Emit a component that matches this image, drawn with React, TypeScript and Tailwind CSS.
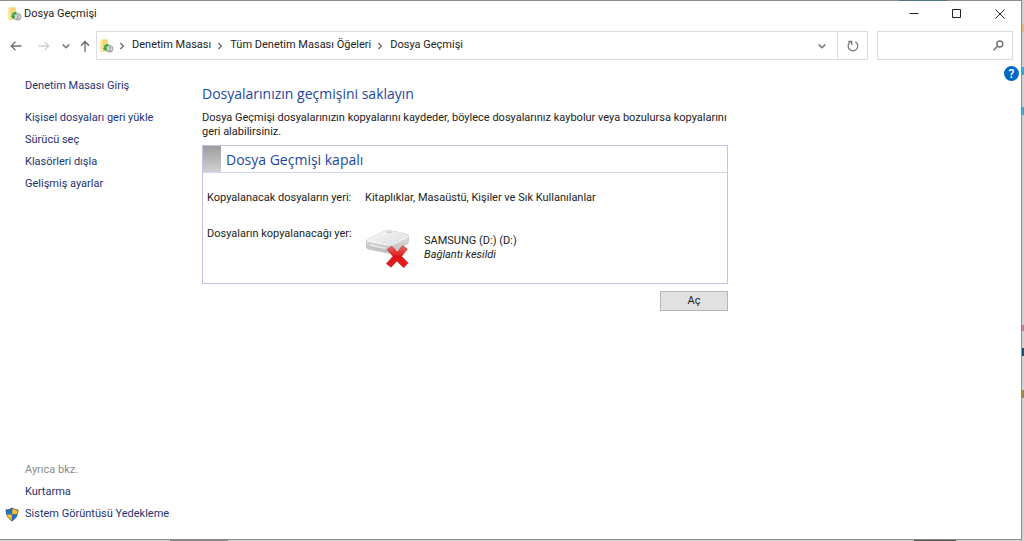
import type { ReactNode } from 'react'

const taskLinks = [
  'Kişisel dosyaları geri yükle',
  'Sürücü seç',
  'Klasörleri dışla',
  'Gelişmiş ayarlar',
]

const crumbs = ['Denetim Masası', 'Tüm Denetim Masası Öğeleri', 'Dosya Geçmişi']

function HistoryIcon() {
  return (
    <svg width="14" height="14" viewBox="0 0 14 14" aria-hidden="true">
      <path d="M.5 1 3 .2 8 .5v10.500L3 13 .5 12Z" fill="#f7d673" />
      <path d="M.5 1 2.500.4v12L.5 12Z" fill="#fbe6a2" />
      <circle cx="9.500" cy="9.800" r="3.400" fill="#d4d9d7" stroke="#8d9593" strokeWidth=".9" />
      <path d="M9.500 7.800v2L11 8.500M8 11.500h3" stroke="#7d8684" strokeWidth=".7" fill="none" />
      <path d="M8.500 6C5.500 5.800 4.200 7.500 4.700 9.700" stroke="#27ad43" strokeWidth="1.800" fill="none" />
      <path d="m2.800 9.300 4.300-.6L5.600 12.300Z" fill="#27ad43" />
    </svg>
  )
}

function Chevron({ down = false }: { down?: boolean }) {
  return (
    <svg
      width="8"
      height="8"
      viewBox="0 0 8 8"
      fill="none"
      stroke="#707070"
      strokeWidth="1.4"
      aria-hidden="true"
    >
      <path d={down ? 'm.7 2.4 3.3 3.3 3.3-3.3' : 'm2.4 1 3 3-3 3'} />
    </svg>
  )
}

function Arrow({ d, color }: { d: string; color: string }) {
  return (
    <svg
      width="12"
      height="12"
      viewBox="0 0 12 12"
      fill="none"
      stroke={color}
      strokeWidth="1.3"
      aria-hidden="true"
    >
      <path d={d} />
    </svg>
  )
}

function DriveIcon() {
  return (
    <svg width="46" height="42" viewBox="0 0 46 42" aria-hidden="true">
      <defs>
        <linearGradient id="driveTop" x1="0" y1="0" x2="1" y2="1">
          <stop offset="0" stopColor="#f8f8f8" />
          <stop offset="1" stopColor="#dedede" />
        </linearGradient>
        <linearGradient id="driveFront" x1="0" y1="0" x2="0" y2="1">
          <stop offset="0" stopColor="#f1f1f1" />
          <stop offset="1" stopColor="#b9b9b9" />
        </linearGradient>
        <linearGradient id="cross" x1="0" y1="0" x2="0" y2="1">
          <stop offset="0" stopColor="#ee6a6a" />
          <stop offset=".5" stopColor="#dc1414" />
          <stop offset="1" stopColor="#ef1c1c" />
        </linearGradient>
      </defs>
      <path
        d="M1.500 13 20 4q2-1 4-.6L41.500 7q1.800.4 1.800 2v7L27 25.500q-2 1-4 .5L3.500 22q-2-.5-2-2Z"
        fill="url(#driveFront)"
        stroke="#c2c2c2"
        strokeWidth=".8"
      />
      <path
        d="M1.800 12.500 20 4q2-1 4-.6L41.500 7q2 .5.5 1.500L27.500 17q-2 1-4 .5L2.500 13.700Z"
        fill="url(#driveTop)"
      />
      <path d="m2 14 21.500 4.200q2 .4 4-.6L43 9.300" fill="none" stroke="#fff" />
      <path d="m4 16 17.500 3.800v3L4 19.500Z" fill="#e2e2e2" stroke="#b5b5b5" strokeWidth=".6" />
      <ellipse cx="24.500" cy="5.300" rx="3" ry="1" fill="#d2d2d2" />
      <path
        d="m22.500 22.500 4-3.300 5.700 5.500 5.500-6 4.600 3.300-5.700 7.300 6.500 6.700-4.300 4.700-7.100-6.700-5.500 6.200-4.800-3.500 6.500-7.300Z"
        fill="url(#cross)"
        stroke="#b52b2b"
        strokeWidth=".7"
        strokeLinejoin="round"
      />
    </svg>
  )
}

function ShieldIcon() {
  return (
    <svg width="14" height="15" viewBox="0 0 14 15" aria-hidden="true">
      <path d="M7 .5Q9.500 2.500 13.300 2.500 14 10 7 14.500 0 10 .7 2.500 4.500 2.500 7 .5Z" fill="#4c5760" />
      <path d="M6.800 1.800v5.500H1.500Q1.300 5.300 1.600 3.400 4.500 3.200 6.800 1.800Z" fill="#1876d1" />
      <path d="M7.200 1.800v5.500h5.300q.2-2-.1-3.900Q9.500 3.200 7.200 1.800Z" fill="#fcc02d" />
      <path d="M6.800 7.500v5.800Q2.500 10.700 1.600 7.500Z" fill="#fcc02d" />
      <path d="M7.200 7.500v5.800q4.300-2.600 5.200-5.800Z" fill="#1876d1" />
    </svg>
  )
}

function SideLink({ children }: { children: ReactNode }) {
  return (
    <a href="#" className="block leading-[22px] text-[#1e3272] hover:underline">
      {children}
    </a>
  )
}

function TitleBar() {
  return (
    <header className="flex h-[26px] items-center pl-2">
      <HistoryIcon />
      <h1 className="ml-0.5 flex-1 text-[#222]">Dosya Geçmişi</h1>
      <div className="flex">
        <button type="button" aria-label="Simge durumuna küçült" className="flex w-[43px] justify-center">
          <svg width="10" height="10" viewBox="0 0 10 10" stroke="#222" aria-hidden="true">
            <path d="M.5 4.500h9" />
          </svg>
        </button>
        <button type="button" aria-label="Ekranı kapla" className="flex w-[43px] justify-center">
          <svg width="10" height="10" viewBox="0 0 10 10" fill="none" stroke="#222" aria-hidden="true">
            <path d="M.5.5h8v8h-8Z" />
          </svg>
        </button>
        <button type="button" aria-label="Kapat" className="flex w-[43px] justify-center">
          <svg width="10" height="10" viewBox="0 0 10 10" fill="none" stroke="#222" aria-hidden="true">
            <path d="m.5.5 9 9m0-9-9 9" />
          </svg>
        </button>
      </div>
    </header>
  )
}

function NavBar() {
  return (
    <nav className="mt-1 flex h-[29px] items-center pr-2 pl-[10px]">
      <button type="button" aria-label="Geri">
        <Arrow d="M11.500 6H1m4.500-4.200L1.200 6l4.300 4.200" color="#707070" />
      </button>
      <button type="button" aria-label="İleri" disabled className="ml-4">
        <Arrow d="M.5 6H11M6.500 1.800 10.800 6l-4.300 4.200" color="#cfcfcf" />
      </button>
      <button type="button" aria-label="Son konumlar" className="ml-3">
        <Chevron down />
      </button>
      <button type="button" aria-label="Yukarı" className="ml-[9px]">
        <Arrow d="M6 12V1.500M2 5.700l4-4.200 4 4.200" color="#666" />
      </button>
      <div className="ml-[5px] flex h-full flex-1 border border-[#dcdcdc]">
        <div className="flex flex-1 items-center pl-[3px]">
          <HistoryIcon />
          {crumbs.map((crumb) => (
            <div key={crumb} className="flex items-center">
              <span className="mr-1.5 ml-1">
                <Chevron />
              </span>
              <a href="#" className="mr-px text-[#222]">
                {crumb}
              </a>
            </div>
          ))}
        </div>
        <button type="button" aria-label="Önceki konumlar" className="flex w-[30px] items-center justify-center">
          <Chevron down />
        </button>
        <button
          type="button"
          aria-label="Yenile"
          className="flex w-[30px] items-center justify-center border-l border-[#dcdcdc]"
        >
          <svg width="12" height="12" viewBox="0 0 12 12" fill="none" stroke="#777" strokeWidth="1.300" aria-hidden="true">
            <path d="M8.300 1.800A4.800 4.800 0 1 1 3.300 2M1.300 1.500h3.400v3.400" />
          </svg>
        </button>
      </div>
      <label className="ml-[9px] flex h-full w-[136px] items-center border border-[#dcdcdc] pr-2">
        <input type="search" aria-label="Ara" className="min-w-0 flex-1 px-1 outline-none" />
        <svg width="11" height="11" viewBox="0 0 11 11" fill="none" stroke="#707070" strokeWidth="1.400" aria-hidden="true">
          <circle cx="6.800" cy="4" r="3" />
          <path d="M4.600 6.200.5 10.300" />
        </svg>
      </label>
    </nav>
  )
}

function Sidebar() {
  return (
    <aside className="flex w-[202px] shrink-0 flex-col pt-[15px] pb-[14px] pl-[25px]">
      <SideLink>Denetim Masası Giriş</SideLink>
      <ul className="mt-[10px]">
        {taskLinks.map((link) => (
          <li key={link}>
            <SideLink>{link}</SideLink>
          </li>
        ))}
      </ul>
      <div className="mt-auto">
        <h2 className="leading-[22px] text-[#8b8b8b]">Ayrıca bkz.</h2>
        <SideLink>Kurtarma</SideLink>
        <div className="-ml-5 flex items-center gap-1.5">
          <ShieldIcon />
          <SideLink>Sistem Görüntüsü Yedekleme</SideLink>
        </div>
      </div>
    </aside>
  )
}

function StatusPanel() {
  return (
    <section className="mt-1.5 border border-[#c3c3e6]">
      <div className="flex h-[27px] items-center border-b border-[#d0d3f0]">
        <div className="h-full w-[18px] bg-linear-to-b from-[#9c9c9c] to-[#d2d2d2]" />
        <h3 className="ml-[5px] pt-0.5 font-['Open_Sans',sans-serif] text-sm text-[#1c47a0]">
          Dosya Geçmişi kapalı
        </h3>
      </div>
      <dl className="grid grid-cols-[158px_1fr] pt-[18px] pb-[14px] pl-1 leading-[14px]">
        <dt>Kopyalanacak dosyaların yeri:</dt>
        <dd>Kitaplıklar, Masaüstü, Kişiler ve Sık Kullanılanlar</dd>
        <dt className="mt-[22px]">Dosyaların kopyalanacağı yer:</dt>
        <dd className="mt-[22px] flex gap-[13px]">
          <DriveIcon />
          <div className="mt-[7px]">
            <p>SAMSUNG (D:) (D:)</p>
            <p className="italic">Bağlantı kesildi</p>
          </div>
        </dd>
      </dl>
    </section>
  )
}

// Slivers of the page that stay visible past the window's right and bottom edges
function Backdrop() {
  return (
    <div aria-hidden="true" className="absolute inset-0 overflow-hidden bg-[#d2d2d2]">
      <div className="absolute top-6 right-0 h-2 w-0.5 bg-[#dfb986]" />
      <div className="absolute top-[67px] right-0 h-2 w-0.5 bg-[#39a9d4]" />
      <div className="absolute top-[107px] right-0 h-2 w-0.5 bg-[#39a9d4]" />
      <div className="absolute top-[325px] right-0 h-1.5 w-0.5 bg-[#bd8390]" />
      <div className="absolute top-[348px] right-0 h-2 w-0.5 bg-[#244d77]" />
      <div className="absolute top-[390px] right-0 h-2 w-0.5 bg-[#a8834f]" />
      <div className="absolute bottom-0 left-[170px] h-px w-[58px] bg-[#8b8585]" />
      <div className="absolute bottom-0 left-[914px] h-px w-[42px] bg-[#55524c]" />
    </div>
  )
}

export default function App() {
  return (
    <div className="relative h-screen pr-0.5 pb-px font-['Roboto','Noto_Sans',sans-serif] text-[11px] text-[#222]">
      <Backdrop />
      <div className="relative flex h-full flex-col border-t border-r border-b border-[#8c8c8c] bg-white">
        <div className="absolute -top-px right-[74px] h-px w-12 bg-[#4d7586]" />
        <TitleBar />
        <NavBar />
        <div className="flex min-h-0 flex-1">
          <Sidebar />
          <main className="min-w-0 flex-1 pt-6">
            <div className="max-w-[526px]">
              <h2 className="font-['Open_Sans',sans-serif] text-sm leading-5 text-[#1c47a0]">
                Dosyalarınızın geçmişini saklayın
              </h2>
              <p className="mt-[7px] leading-[14px]">
                Dosya Geçmişi dosyalarınızın kopyalarını kaydeder, böylece dosyalarınız kaybolur veya bozulursa
                kopyalarını geri alabilirsiniz.
              </p>
              <StatusPanel />
              <div className="mt-[7px] flex justify-end">
                <button
                  type="button"
                  className="h-5 w-[68px] border border-[#b5b5b5] bg-[#e1e1e1] text-[#222] hover:bg-[#e5f1fb]"
                >
                  Aç
                </button>
              </div>
            </div>
          </main>
          <button
            type="button"
            aria-label="Yardım"
            className="mt-[6px] mr-0.5 flex size-[15px] items-center justify-center rounded-full bg-[#0067c5] text-xs font-medium text-white"
          >
            ?
          </button>
        </div>
      </div>
    </div>
  )
}
